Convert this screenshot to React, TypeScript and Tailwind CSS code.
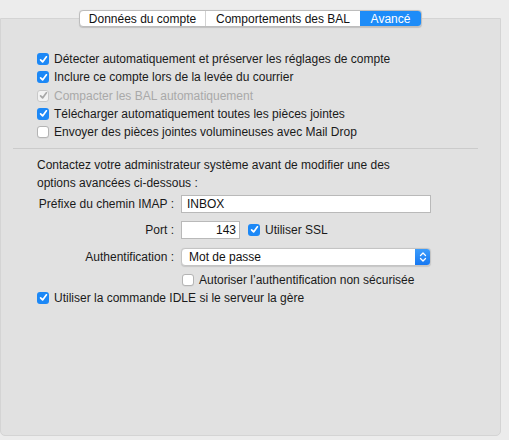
import React from 'react';

const font = { fontFamily: '"Liberation Sans", Arial, sans-serif' };

function Check({ checked, disabled }: { checked?: boolean; disabled?: boolean }) {
  if (!checked) {
    return <span className="block h-[12px] w-[12px] shrink-0 rounded-[3px] border border-[#b4b4b4] bg-white shadow-[0_0.5px_0.5px_rgba(0,0,0,0.08)]" />;
  }
  return (
    <span
      className={
        disabled
          ? 'flex h-[12px] w-[12px] shrink-0 items-center justify-center rounded-[3px] border border-[#c9c9c9] bg-[#f3f3f3]'
          : 'flex h-[12px] w-[12px] shrink-0 items-center justify-center rounded-[3px] bg-[#1c88f6]'
      }
    >
      <svg width="9" height="9" viewBox="0 0 9 9">
        <path d="M1.6 4.8 L3.6 6.9 L7.4 1.8" fill="none" stroke={disabled ? '#a8a8a8' : '#fff'} strokeWidth="1.7" strokeLinecap="round" strokeLinejoin="round" />
      </svg>
    </span>
  );
}

function Row({ label, checked, disabled }: { label: string; checked?: boolean; disabled?: boolean }) {
  return (
    <div className="flex h-[18.25px] items-center gap-[5px]">
      <Check checked={checked} disabled={disabled} />
      <span className={disabled ? 'text-[#a9a9a9]' : 'text-[#1a1a1a]'}>{label}</span>
    </div>
  );
}

export default function App() {
  return (
    <div className="h-[440px] w-[509px] overflow-hidden bg-[#ececec] text-[12px] leading-[18px]" style={font}>
      <div className="mt-[18px] h-[418px] w-[501px] rounded-b-[5px] border border-[#d4d4d4] bg-[#e1e1e1]">
        <div className="relative -mt-[9px] flex justify-center">
          <div className="flex h-[17px] items-stretch overflow-hidden rounded-[4px] border border-[#bdbdbd] bg-white shadow-[0_0.5px_1px_rgba(0,0,0,0.15)]">
            <div className="flex w-[126px] items-center justify-center border-r border-[#d2d2d2] text-[#111]">Données du compte</div>
            <div className="flex w-[154px] items-center justify-center text-[#111]">Comportements des BAL</div>
            <div className="flex w-[61px] items-center justify-center bg-[#1d8cf8] text-white">Avancé</div>
          </div>
        </div>

        <div className="mt-[23px] pl-[36px]">
          <Row label="Détecter automatiquement et préserver les réglages de compte" checked />
          <Row label="Inclure ce compte lors de la levée du courrier" checked />
          <Row label="Compacter les BAL automatiquement" checked disabled />
          <Row label="Télécharger automatiquement toutes les pièces jointes" checked />
          <Row label="Envoyer des pièces jointes volumineuses avec Mail Drop" />
        </div>

        <div className="ml-[12px] mr-[22px] mt-[6.5px] h-px bg-[#cbcbcb]" />

        <p className="mt-[7px] pl-[36px] pr-[100px] text-[#1a1a1a]">
          Contactez votre administrateur système avant de modifier une des options avancées ci-dessous :
        </p>

        <div className="mt-[3px] flex h-[18px] items-center">
          <span className="w-[175px] pr-[2px] text-right text-[#1a1a1a]">Préfixe du chemin IMAP :</span>
          <div className="ml-[5px] flex h-[18px] w-[250px] items-center border border-[#b9b9b9] bg-white pl-[5px] text-[#111]">INBOX</div>
        </div>

        <div className="mt-[8px] flex h-[18px] items-center">
          <span className="w-[175px] pr-[2px] text-right text-[#1a1a1a]">Port :</span>
          <div className="ml-[5px] flex h-[18px] w-[59px] items-center justify-end border border-[#b9b9b9] bg-white pr-[3px] text-[#111]">143</div>
          <span className="ml-[8px] flex items-center gap-[5px]">
            <Check checked />
            <span className="text-[#1a1a1a]">Utiliser SSL</span>
          </span>
        </div>

        <div className="mt-[9px] flex h-[18px] items-center">
          <span className="w-[175px] pr-[2px] text-right text-[#1a1a1a]">Authentification :</span>
          <div className="ml-[5px] flex h-[18px] w-[250px] items-stretch overflow-hidden rounded-[4px] border border-[#c4c4c4] bg-white shadow-[0_0.5px_1px_rgba(0,0,0,0.12)]">
            <span className="flex flex-1 items-center pl-[7px] text-[#111]">Mot de passe</span>
            <span className="flex w-[15px] items-center justify-center bg-gradient-to-b from-[#3b9cfb] to-[#1678f2]">
              <svg width="8" height="12" viewBox="0 0 8 12">
                <path d="M1.5 4.5 L4 2 L6.5 4.5 M1.5 7.5 L4 10 L6.5 7.5" fill="none" stroke="#fff" strokeWidth="1.3" strokeLinecap="round" strokeLinejoin="round" />
              </svg>
            </span>
          </div>
        </div>

        <div className="mt-[5px] flex h-[18px] items-center pl-[181px]">
          <span className="flex items-center gap-[5px]">
            <Check />
            <span className="text-[#1a1a1a]">Autoriser l’authentification non sécurisée</span>
          </span>
        </div>

        <div className="pl-[36px]">
          <Row label="Utiliser la commande IDLE si le serveur la gère" checked />
        </div>
      </div>
    </div>
  );
}
